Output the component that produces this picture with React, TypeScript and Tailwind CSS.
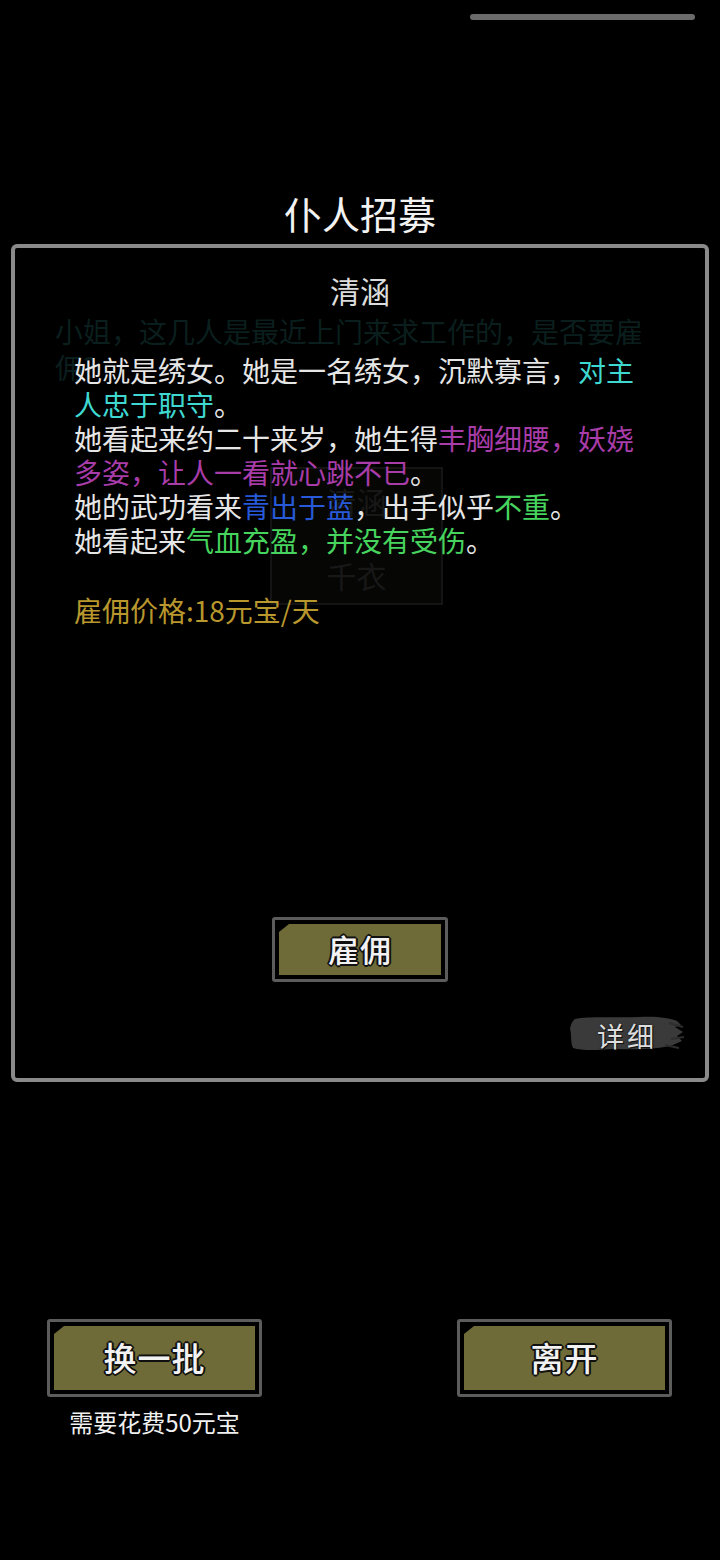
import React from 'react';

const FONT = '[font-family:"Noto_Sans_CJK_SC","Noto_Sans",sans-serif]';

type Seg = { t: string; c?: string };

const lines: Seg[][] = [
  [{ t: '她就是绣女。她是一名绣女，沉默寡言，' }, { t: '对主', c: 'text-[#3fd8d0]' }],
  [{ t: '人忠于职守', c: 'text-[#3fd8d0]' }, { t: '。' }],
  [{ t: '她看起来约二十来岁，她生得' }, { t: '丰胸细腰，妖娆', c: 'text-[#a83ca8]' }],
  [{ t: '多姿，让人一看就心跳不已', c: 'text-[#a83ca8]' }, { t: '。' }],
  [
    { t: '她的武功看来' },
    { t: '青出于蓝', c: 'text-[#2759d8]' },
    { t: '，出手似乎' },
    { t: '不重', c: 'text-[#46d45e]' },
    { t: '。' },
  ],
  [{ t: '她看起来' }, { t: '气血充盈，并没有受伤', c: 'text-[#46d45e]' }, { t: '。' }],
];

const outline =
  '[text-shadow:0_0_2px_#111,1px_1px_0_#111,-1px_-1px_0_#111,1px_-1px_0_#111,-1px_1px_0_#111,2px_0_0_#111,-2px_0_0_#111,0_2px_0_#111,0_-2px_0_#111]';

const OliveButton: React.FC<{ label: string; w: string; h: string; size: string }> = ({ label, w, h, size }) => (
  <div className={`${w} ${h} border-[3px] border-[#5c5c5c] bg-black p-[4px] rounded-[3px]`}>
    <div className="w-full h-full bg-[#6f6b38] flex items-center justify-center [clip-path:polygon(10px_0,100%_0,100%_100%,0_100%,0_8px)]">
      <span className={`${size} font-medium text-[#f2f2f2] tracking-[1px] ${outline}`}>{label}</span>
    </div>
  </div>
);

export default function App() {
  return (
    <div className={`w-[720px] h-[1560px] bg-black flex flex-col ${FONT}`}>
      {/* top handle */}
      <div className="pt-[14px] flex justify-end pr-[25px]">
        <div className="w-[225px] h-[6px] rounded-full bg-[#6b6b6b]" />
      </div>

      <div className="mt-[169px] text-center text-[38px] leading-[48px] text-[#f2f2f2]">仆人招募</div>

      {/* panel */}
      <div className="relative mt-[7px] mx-[11px] w-[698px] h-[838px] border-4 border-[#8a8a8a] rounded-[6px] flex flex-col">
        {/* faint layer behind */}
        <div className="absolute inset-0 pointer-events-none">
          <div className="absolute left-[40px] top-[65px] text-[28px] leading-[36px] text-[#0a1f1d]">
            <div>小姐，这几人是最近上门来求工作的，是否要雇</div>
            <div>佣?</div>
          </div>
          <div className="absolute left-[255px] top-[219px] w-[173px] h-[138px] border-2 border-[#141414] bg-[#060605] flex flex-col items-center">
            <div className="mt-[14px] text-[30px] leading-[36px] text-[#181818]">清涵</div>
            <div className="mt-[38px] text-[30px] leading-[36px] text-[#181818]">千衣</div>
          </div>
        </div>

        <div className="relative mt-[22px] text-center text-[30px] leading-[40px] text-[#dcdcdc]">清涵</div>

        <div className="relative mt-[43px] pl-[59px] text-[28px] leading-[34px] text-[#e6e6e6]">
          {lines.map((l, i) => (
            <div key={i} className="whitespace-nowrap">
              {l.map((s, j) => (
                <span key={j} className={s.c}>
                  {s.t}
                </span>
              ))}
            </div>
          ))}
          <div className="h-[36px]" />
          <div className="text-[#b8972c]">雇佣价格:18元宝/天</div>
        </div>

        <div className="relative mt-[290px] flex justify-center">
          <OliveButton label="雇佣" w="w-[176px]" h="h-[65px]" size="text-[31px]" />
        </div>

        <div className="relative mt-[33px] flex justify-end pr-[20px]">
          <div className="relative w-[116px] h-[38px] flex items-center justify-center">
            <svg className="absolute inset-0" width="116" height="38" viewBox="0 0 116 38">
              <path
                d="M6 4 C20 1 45 3 70 2 C88 1 100 3 108 6 L112 10 L106 12 L114 17 L108 21 L113 26 L104 30 C90 34 70 35 45 34 C28 35 14 36 4 33 C1 26 3 20 1 14 C2 9 3 6 6 4 Z"
                fill="#3a3a3a"
              />
              <path d="M100 8 L114 12 M102 24 L115 22 M96 30 L110 33" stroke="#2e2e2e" strokeWidth="2" />
            </svg>
            <span className="relative mt-[3px] text-[27px] leading-[34px] text-[#dedede] tracking-[3px] [text-shadow:0_0_2px_#111,1px_1px_0_#111]">
              详细
            </span>
          </div>
        </div>
      </div>

      {/* bottom buttons */}
      <div className="mt-[237px] flex justify-between pl-[47px] pr-[48px]">
        <div className="flex flex-col items-center">
          <OliveButton label="换一批" w="w-[215px]" h="h-[78px]" size="text-[33px]" />
          <div className="mt-[9px] text-[24px] leading-[32px] text-[#f0f0f0]">需要花费50元宝</div>
        </div>
        <OliveButton label="离开" w="w-[215px]" h="h-[78px]" size="text-[33px]" />
      </div>
    </div>
  );
}
